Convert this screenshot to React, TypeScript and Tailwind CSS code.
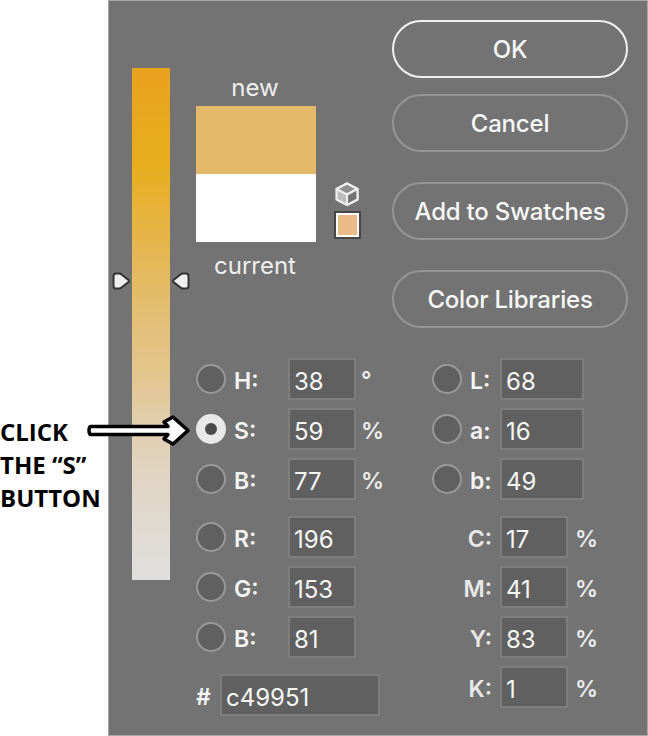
import React from "react";

const ff = "font-['Inter','Liberation_Sans',sans-serif]";

function Radio({ on }: { on?: boolean }) {
  return on ? (
    <div className="flex h-[30px] w-[30px] shrink-0 items-center justify-center rounded-full bg-[#e8e8e8]">
      <div className="h-[12px] w-[12px] rounded-full bg-[#4b4b4b]" />
    </div>
  ) : (
    <div className="h-[30px] w-[30px] shrink-0 rounded-full border-2 border-[#999999] bg-[#5f605f]" />
  );
}

function Field({ v, w = "w-[68px]" }: { v: string; w?: string }) {
  return (
    <div className={`flex h-[42px] shrink-0 items-center border-2 border-[#7e7e7e] bg-[#5f605f] pl-[4px] pt-[6px] text-[24px] leading-none text-[#f6f6f6] ${w}`}>
      {v}
    </div>
  );
}

function RadioRow({ label, v, unit, lw, w }: { label: string; v: string; unit?: string; lw: string; w?: string }) {
  return (
    <div className="flex h-[42px] items-center">
      <Radio on={label === "S:"} />
      <div className={`ml-[8px] pt-[4px] text-[23px] font-semibold leading-none text-[#f4f4f4] ${lw}`}>{label}</div>
      <Field v={v} w={w} />
      {unit && (
        <div className={`ml-[5px] text-[23px] font-semibold leading-none text-[#ececec] ${unit === "°" ? "translate-y-[1px] font-bold" : "pt-[4px]"}`}>{unit}</div>
      )}
    </div>
  );
}

function Btn({ label, primary, cls }: { label: string; primary?: boolean; cls?: string }) {
  return (
    <div className={`flex h-[58px] w-[236px] items-center justify-center rounded-full border-2 pt-[1px] text-[24px] font-medium leading-none tracking-[-0.2px] text-[#f8f8f8] ${primary ? "border-[#f0f0f0]" : "border-[#959595]"} ${cls ?? ""}`}>
      {label}
    </div>
  );
}

function Handle({ flip, cls }: { flip?: boolean; cls: string }) {
  return (
    <svg width="19" height="18" viewBox="0 0 19 18" className={`absolute top-[204px] ${flip ? "-scale-x-100" : ""} ${cls}`}>
      <path d="M4 1.5 H7.5 Q8.5 1.5 9.5 2.5 L16.5 8 Q17.5 9 16.5 10 L9.5 15.5 Q8.5 16.5 7.5 16.5 H4 Q1.5 16.5 1.5 14 V4 Q1.5 1.5 4 1.5 Z" fill="#eeeeee" stroke="#333333" strokeWidth="2" />
    </svg>
  );
}

export default function App() {
  return (
    <div className={`relative flex h-[736px] w-[648px] bg-white ${ff}`}>
      <div className="w-[108px] shrink-0 pt-[415px] font-['Open_Sans',sans-serif] text-[24px] font-bold leading-[33px] text-black">
        <div>CLICK</div>
        <div className="whitespace-nowrap">THE “S”</div>
        <div>BUTTON</div>
      </div>

      <div className="flex h-[736px] w-[540px] border border-[#a6a6a6] bg-[#737373]">
        <div className="relative ml-[23px] mt-[67px] h-[512px] w-[38px] shrink-0 bg-[linear-gradient(to_bottom,#e9a120_0%,#e8ae1e_19%,#e4b95f_40%,#e3c68f_60%,#e1d0b4_72%,#e0d8cc_86%,#dfdfdf_100%)]">
          <Handle cls="left-[-20px]" />
          <Handle flip cls="left-[39px]" />
        </div>

        <div className="ml-[26px] w-[450px] shrink-0">
          <div className="flex h-[357px]">
            <div className="w-[120px] shrink-0">
              <div className="h-[105px] pr-[2px] pt-[74px] text-center text-[24px] leading-[26px] text-[#eeeeee]">new</div>
              <div className="h-[68px] bg-[#e4b96a]" />
              <div className="h-[68px] bg-white" />
              <div className="pr-[2px] pt-[11px] text-center text-[24px] leading-[26px] text-[#eeeeee]">current</div>
            </div>

            <div className="ml-[18px] w-[27px] shrink-0 pt-[181px]">
              <svg width="24" height="24" viewBox="0 0 24 24" className="ml-[1px]">
                <path d="M12 1.5 L22.5 7 V17.5 L12 23 L1.5 17.5 V7 Z" fill="#bbbbbb" stroke="#eeeeee" strokeWidth="2.2" strokeLinejoin="round" />
                <path d="M12 1.5 L22.5 7 L12 12.5 L1.5 7 Z" fill="#8f8f8f" stroke="#eeeeee" strokeWidth="2.2" strokeLinejoin="round" />
                <path d="M12 12.5 L22.5 7 V17.5 L12 23 Z" fill="#737373" stroke="#eeeeee" strokeWidth="2.2" strokeLinejoin="round" />
              </svg>
              <div className="mt-[5px] h-[28px] w-[27px] border-2 border-[#474747] bg-white p-[2px]">
                <div className="h-full w-full bg-[#ebbb87]" />
              </div>
            </div>

            <div className="ml-[31px] shrink-0 pt-[19px]">
              <Btn label="OK" primary />
              <Btn label="Cancel" cls="mt-[16px]" />
              <Btn label="Add to Swatches" cls="mt-[30px]" />
              <Btn label="Color Libraries" cls="mt-[30px]" />
            </div>
          </div>

          <div className="flex">
            <div className="w-[236px] shrink-0">
              <div className="flex flex-col gap-[8px]">
                <RadioRow label="H:" v="38" unit="°" lw="w-[54px]" />
                <RadioRow label="S:" v="59" unit="%" lw="w-[54px]" />
                <RadioRow label="B:" v="77" unit="%" lw="w-[54px]" />
              </div>
              <div className="mt-[16px] flex flex-col gap-[8px]">
                <RadioRow label="R:" v="196" lw="w-[54px]" />
                <RadioRow label="G:" v="153" lw="w-[54px]" />
                <RadioRow label="B:" v="81" lw="w-[54px]" />
              </div>
              <div className="mt-[16px] flex h-[42px] items-center">
                <div className="w-[24px] pt-[4px] text-[23px] font-semibold leading-none text-[#f4f4f4]">#</div>
                <Field v="c49951" w="w-[160px]" />
              </div>
            </div>

            <div className="shrink-0">
              <div className="flex flex-col gap-[8px]">
                <RadioRow label="L:" v="68" lw="w-[30px]" w="w-[84px]" />
                <RadioRow label="a:" v="16" lw="w-[30px]" w="w-[84px]" />
                <RadioRow label="b:" v="49" lw="w-[30px]" w="w-[84px]" />
              </div>
              <div className="mt-[16px] flex flex-col gap-[8px]">
                {[["C:", "17"], ["M:", "41"], ["Y:", "83"], ["K:", "1"]].map(([l, v]) => (
                  <div key={l} className="flex h-[42px] items-center">
                    <div className="mr-[8px] w-[60px] pt-[4px] text-right text-[23px] font-semibold leading-none text-[#e8e8e8]">{l}</div>
                    <Field v={v} />
                    <div className="ml-[7px] pt-[4px] text-[23px] font-semibold leading-none text-[#ececec]">%</div>
                  </div>
                ))}
              </div>
            </div>
          </div>
        </div>
      </div>

      <svg width="106" height="40" viewBox="0 0 106 40" className="absolute left-[86px] top-[410px]">
        <path d="M5 16.5 H82 L78 12 L87 7 L102 20.5 L87 34 L78 29 L82 24.5 H5 Q3 24.5 3 20.5 Q3 16.5 5 16.5 Z" fill="#ffffff" stroke="#000000" strokeWidth="3.5" strokeLinejoin="round" />
      </svg>
    </div>
  );
}
